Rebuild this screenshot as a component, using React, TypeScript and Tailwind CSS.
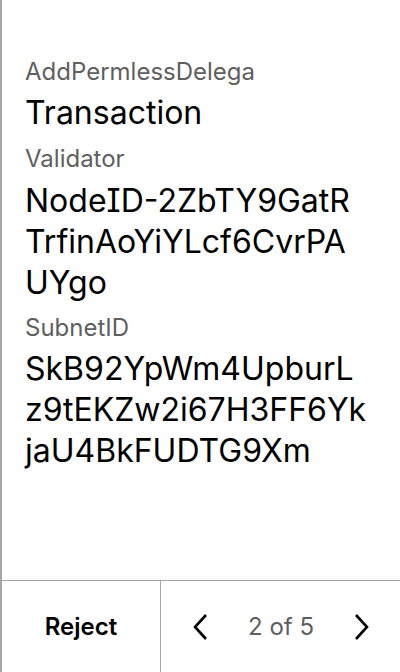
import React from "react";

const Label = ({ children, className = "" }: { children: React.ReactNode; className?: string }) => (
  <div className={"text-[24px] leading-[28px] text-[#5f5f5f] " + className}>{children}</div>
);

const Value = ({ lines, className = "" }: { lines: string[]; className?: string }) => (
  <div className={"text-[32px] leading-[41px] text-black [font-feature-settings:'cv08'] " + className}>
    {lines.map((l) => (
      <div key={l} className="whitespace-nowrap">
        {l}
      </div>
    ))}
  </div>
);

export default function App() {
  return (
    <div
      className="w-[400px] h-[672px] bg-white flex flex-col border-l-2 border-[#a6a6a6] overflow-hidden"
      style={{ fontFamily: "Inter, 'Noto Sans', sans-serif" }}
    >
      <div className="flex-1 pl-[23px] pr-6 pt-[58px]">
        <Label>AddPermlessDelega</Label>
        <Value lines={["Transaction"]} className="mt-[6px]" />
        <Label className="mt-[12px]">Validator</Label>
        <Value
          lines={["NodeID-2ZbTY9GatR", "TrfinAoYiYLcf6CvrPA", "UYgo"]}
          className="mt-[7px]"
        />
        <Label className="mt-[11px]">SubnetID</Label>
        <Value
          lines={["SkB92YpWm4UpburL", "z9tEKZw2i67H3FF6Yk", "jaU4BkFUDTG9Xm"]}
          className="mt-[6px]"
        />
      </div>
      <div className="h-[92px] border-t border-[#a6a6a6] flex">
        <div className="w-[159px] border-r border-[#a6a6a6] flex items-center justify-center">
          <span className="text-[24px] font-semibold text-black">Reject</span>
        </div>
        <div className="flex-1 flex items-center justify-between pl-[31px] pr-[30px]">
          <svg width="18" height="28" viewBox="0 0 18 28" fill="none" stroke="black" strokeWidth="2.6">
            <path d="M14 2 L3 14 L14 26" />
          </svg>
          <span className="text-[24px] text-[#5f5f5f]">2 of 5</span>
          <svg width="18" height="28" viewBox="0 0 18 28" fill="none" stroke="black" strokeWidth="2.6">
            <path d="M4 2 L15 14 L4 26" />
          </svg>
        </div>
      </div>
    </div>
  );
}
